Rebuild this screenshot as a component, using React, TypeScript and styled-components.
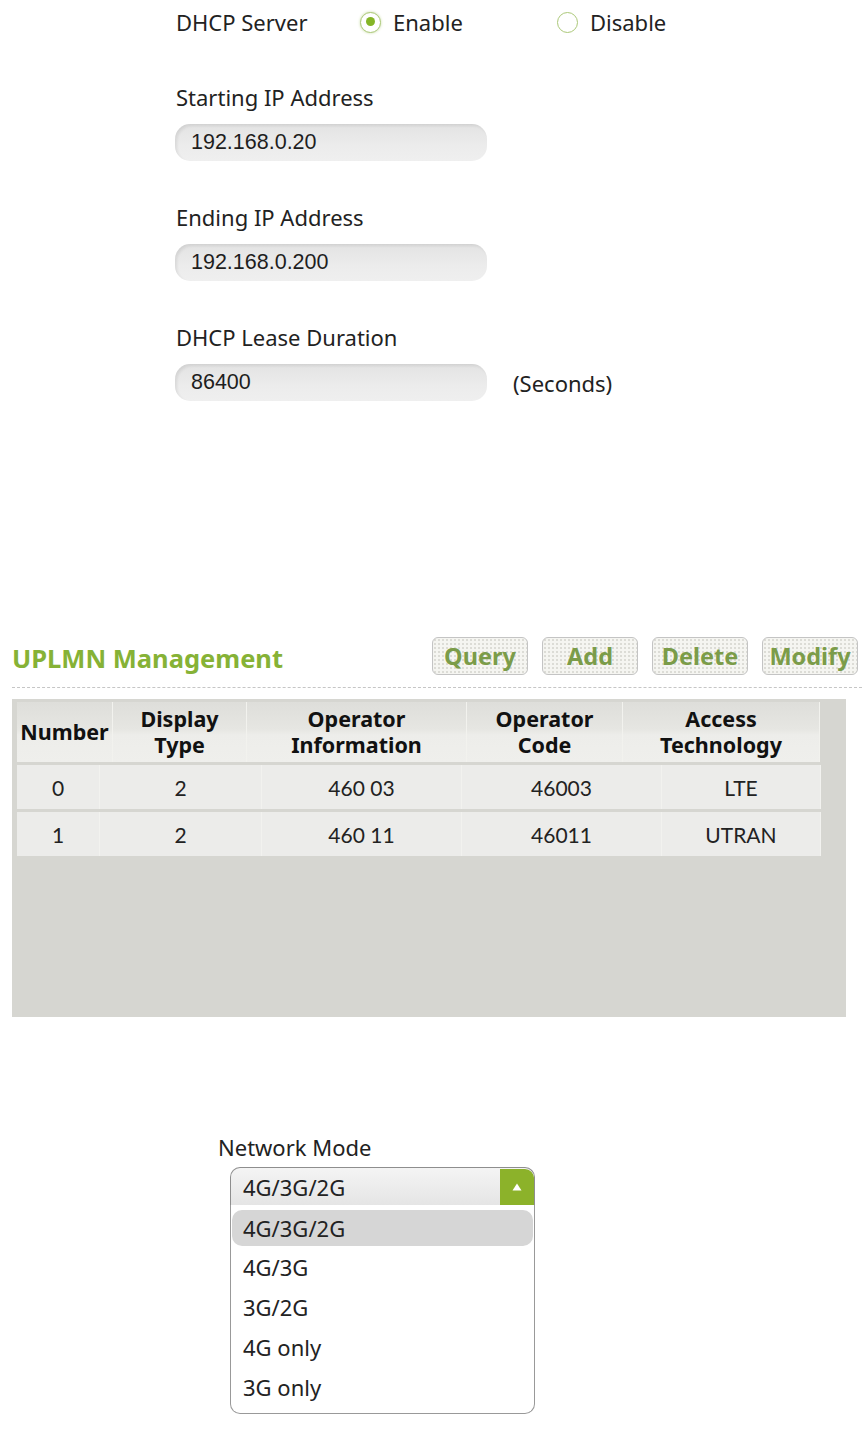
import React from 'react';
import styled, {createGlobalStyle, css} from 'styled-components';

const GlobalStyle = createGlobalStyle`
    html, body {
        margin: 0;
        padding: 0;
        background: #ffffff;
    }
    body {
        font-family: "Noto Sans", "Open Sans", sans-serif;
        color: #222;
    }
`;

interface Field {
    label: string;
    value: string;
    unit?: string;
}

const fields: Field[] = [
    {label: 'Starting IP Address', value: '192.168.0.20'},
    {label: 'Ending IP Address', value: '192.168.0.200'},
    {label: 'DHCP Lease Duration', value: '86400', unit: '(Seconds)'},
];

const headerCols = [96, 134, 220, 156, 197];
const bodyCols = [83, 162, 200, 200, 159];

const headers = ['Number', 'Display\nType', 'Operator\nInformation', 'Operator\nCode', 'Access\nTechnology'];

const rows = [
    ['0', '2', '460 03', '46003', 'LTE'],
    ['1', '2', '460 11', '46011', 'UTRAN'],
];

const modes = ['4G/3G/2G', '4G/3G', '3G/2G', '4G only', '3G only'];

const App = () => {
    return (
        <Page>
            <GlobalStyle/>

            <DhcpSection>
                <ServerRow>
                    <ServerLabel>DHCP Server</ServerLabel>
                    <RadioOption $width={197}>
                        <Radio $checked/>
                        Enable
                    </RadioOption>
                    <RadioOption>
                        <Radio/>
                        Disable
                    </RadioOption>
                </ServerRow>

                {fields.map((field) => (
                    <FieldGroup key={field.label}>
                        <FieldLabel>{field.label}</FieldLabel>
                        <InputRow>
                            <TextInput>{field.value}</TextInput>
                            {field.unit && <Unit>{field.unit}</Unit>}
                        </InputRow>
                    </FieldGroup>
                ))}
            </DhcpSection>

            <UplmnSection>
                <SectionHeader>
                    <Title>UPLMN Management</Title>
                    <Buttons>
                        {['Query', 'Add', 'Delete', 'Modify'].map((b) => (
                            <ActionButton key={b}>{b}</ActionButton>
                        ))}
                    </Buttons>
                </SectionHeader>

                <TableBox>
                    <Grid $cols={headerCols}>
                        {headers.map((h) => (
                            <HeadCell key={h}>{h}</HeadCell>
                        ))}
                    </Grid>
                    {rows.map((row, i) => (
                        <Grid key={i} $cols={bodyCols} $body>
                            {row.map((cell, j) => (
                                <BodyCell key={j}>{cell}</BodyCell>
                            ))}
                        </Grid>
                    ))}
                </TableBox>
            </UplmnSection>

            <ModeSection>
                <FieldLabel>Network Mode</FieldLabel>
                <Select>
                    <SelectValue>4G/3G/2G</SelectValue>
                    <ArrowBox>
                        <svg width="10" height="8" viewBox="0 0 10 8">
                            <path d="M5 0.5 L9.5 7.5 L0.5 7.5 Z" fill="#ffffff"/>
                        </svg>
                    </ArrowBox>
                </Select>
                <OptionList>
                    {modes.map((m, i) => (
                        <OptionItem key={m} $active={i === 0}>{m}</OptionItem>
                    ))}
                </OptionList>
            </ModeSection>
        </Page>
    );
};

const Page = styled.div`
    width: 862px;
    min-height: 1432px;
    background: #fff;
`;

const DhcpSection = styled.div`
    padding-left: 176px;
`;

const ServerRow = styled.div`
    display: flex;
    align-items: center;
    height: 44px;
    font-size: 22px;
    color: #222;
`;

const ServerLabel = styled.div`
    width: 184px;
`;

const RadioOption = styled.label<{ $width?: number }>`
    display: flex;
    align-items: center;
    gap: 12px;
    ${({$width}) => $width && css`width: ${$width}px;`}
`;

const Radio = styled.span<{ $checked?: boolean }>`
    position: relative;
    width: 21px;
    height: 21px;
    box-sizing: border-box;
    border-radius: 50%;
    border: 1.5px solid #abc878;
    background: #fff;

    ${({$checked}) => $checked && css`
        box-shadow: 0 0 3px #c8dca4;
        &::after {
            content: '';
            position: absolute;
            left: 4.5px;
            top: 4.5px;
            width: 9px;
            height: 9px;
            border-radius: 50%;
            background: #84b526;
        }
    `}
`;

const FieldGroup = styled.div`
    margin-top: 38px;

    & + & {
        margin-top: 41px;
    }
`;

const FieldLabel = styled.div`
    font-size: 22px;
    line-height: 30px;
    color: #222;
`;

const InputRow = styled.div`
    display: flex;
    align-items: center;
    margin-top: 12px;
`;

const TextInput = styled.div`
    width: 312px;
    height: 37px;
    margin-left: -1px;
    box-sizing: border-box;
    padding-left: 16px;
    display: flex;
    align-items: center;
    border-radius: 15px;
    background: linear-gradient(to bottom, #e3e3e3, #ececec 60%, #efefef);
    box-shadow: inset 2px 2px 3px rgba(0, 0, 0, 0.08);
    font-family: "Liberation Sans", Arial, sans-serif;
    font-size: 21.5px;
    color: #1e1e1e;
`;

const Unit = styled.div`
    margin-left: 26px;
    font-size: 22px;
    color: #222;
`;

const UplmnSection = styled.div`
    margin-top: 236px;
    padding-left: 12px;
`;

const SectionHeader = styled.div`
    display: flex;
    align-items: center;
    justify-content: space-between;
    padding: 0 4px 12px 0;
    border-bottom: 1px dashed #c6c6c6;
`;

const Title = styled.div`
    font-size: 25.5px;
    font-weight: 700;
    color: #86b236;
    padding-top: 4px;
`;

const Buttons = styled.div`
    display: flex;
    gap: 14px;
`;

const ActionButton = styled.button`
    width: 96px;
    height: 38px;
    padding: 0;
    border: 1px solid #c4c4c4;
    border-radius: 6px;
    background-color: #f5f5f1;
    background-image: radial-gradient(#dcdcd6 0.8px, transparent 1px);
    background-size: 4px 4px;
    font-family: "Noto Sans", sans-serif;
    font-size: 23.5px;
    font-weight: 700;
    color: #7b9c49;
    cursor: pointer;
`;

const TableBox = styled.div`
    width: 834px;
    height: 318px;
    margin-top: 11px;
    box-sizing: border-box;
    padding: 3px 0 0 5px;
    background: #d6d6d1;
`;

const Grid = styled.div<{ $cols: number[]; $body?: boolean }>`
    display: grid;
    grid-template-columns: ${({$cols}) => $cols.map((c) => `${c}px`).join(' ')};
    ${({$body}) => $body && css`margin-top: 3px;`}
`;

const HeadCell = styled.div`
    height: 60px;
    display: flex;
    align-items: center;
    justify-content: center;
    white-space: pre-line;
    text-align: center;
    border-right: 1px solid #f2f2ee;
    background: linear-gradient(to bottom, #dededa 0%, #e6e6e2 45%, #ededea 55%, #efefec 100%);
    font-size: 21.5px;
    font-weight: 700;
    line-height: 26px;
    color: #111;
`;

const BodyCell = styled.div`
    height: 44px;
    display: flex;
    align-items: center;
    justify-content: center;
    border-right: 1px solid #f2f2ef;
    background: #ececea;
    font-family: Lato, "Noto Sans", sans-serif;
    font-size: 21px;
    color: #222;
`;

const ModeSection = styled.div`
    margin-top: 115px;
    padding-left: 218px;
`;

const Select = styled.div`
    display: flex;
    width: 305px;
    height: 38px;
    margin: 5px 0 0 12px;
    box-sizing: border-box;
    border: 1px solid #8e8e8e;
    border-bottom: none;
    border-radius: 10px 10px 0 0;
    overflow: hidden;
    background: linear-gradient(to bottom, #f4f4f4, #e5e5e5);
`;

const SelectValue = styled.div`
    flex: 1;
    display: flex;
    align-items: center;
    padding-left: 12px;
    font-size: 22px;
    color: #222;
`;

const ArrowBox = styled.div`
    width: 34px;
    margin-top: 1px;
    display: flex;
    align-items: center;
    justify-content: center;
    background: #8cb22a;
    border-top-right-radius: 9px;
`;

const OptionList = styled.div`
    width: 305px;
    margin-left: 12px;
    box-sizing: border-box;
    padding: 2px 1px 6px;
    border: 1px solid #999;
    border-top: none;
    border-radius: 0 0 10px 10px;
    background: #fff;
`;

const OptionItem = styled.div<{ $active?: boolean }>`
    height: 40px;
    display: flex;
    align-items: center;
    padding-left: 11px;
    font-size: 22px;
    color: #222;

    ${({$active}) => $active && css`
        height: 36px;
        margin: 3px 0 1px;
        border-radius: 10px;
        background: #d6d6d6;
    `}
`;

export default App;
